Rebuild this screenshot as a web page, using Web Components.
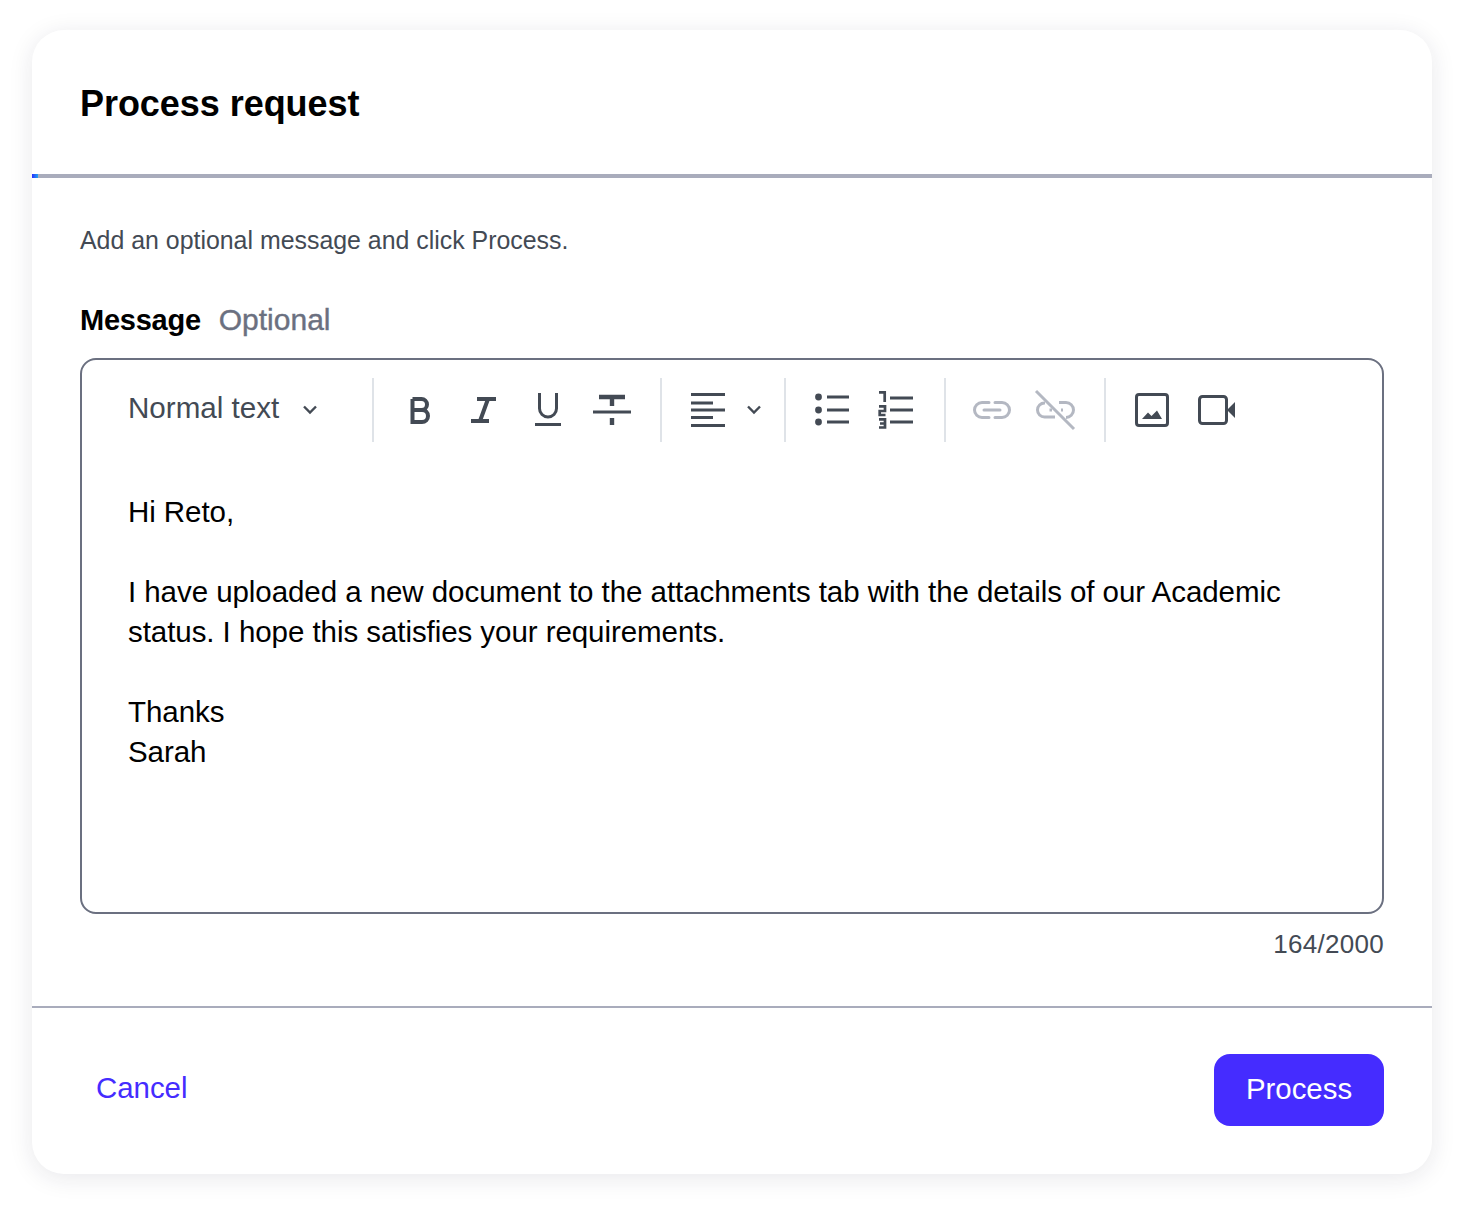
<!DOCTYPE html>
<html lang="en">
<head>
<meta charset="utf-8">
<title>Process request</title>
<style>
  html, body { margin: 0; padding: 0; background: #ffffff; }
  body { font-family: "Liberation Sans", Arial, sans-serif; }
</style>
</head>
<body>
<process-dialog>
  <span slot="title">Process request</span>
  <span slot="hint">Add an optional message and click Process.</span>
  <rich-editor slot="editor" label="Message" count="164/2000">
    <p>Hi Reto,</p>
    <p>I have uploaded a new document to the attachments tab with the details of our Academic status. I hope this satisfies your requirements.</p>
    <p>Thanks<br>Sarah</p>
  </rich-editor>
  <action-button slot="cancel" variant="link">Cancel</action-button>
  <action-button slot="submit" variant="primary">Process</action-button>
</process-dialog>

<script>
// All icons are drawn on a 48x48 grid
const ICONS = {
  bold: '<path d="M16.5 13H25.5a5.5 5.5 0 0 1 0 11H16.5M16.5 24H26a6 6 0 0 1 0 12H16.5V13Z" fill="none" stroke="currentColor" stroke-width="4"/>',
  italic: '<path d="M17 13H36M11 35H29M28 13L20 35" fill="none" stroke="currentColor" stroke-width="4"/>',
  underline: '<path d="M15.5 7V22.5a8.5 8.5 0 0 0 17 0V7" fill="none" stroke="currentColor" stroke-width="3"/><path d="M11 38.5H37" stroke="currentColor" stroke-width="3"/>',
  strike: '<path d="M11 11H37M24 11V20M24 32V39" fill="none" stroke="currentColor" stroke-width="4.4"/><path d="M5 26H43" stroke="currentColor" stroke-width="3"/>',
  align: '<path d="M7 8.5H41M7 17H29M7 24H41M7 31.5H29M7 39.5H41" fill="none" stroke="currentColor" stroke-width="3"/>',
  bullets: '<circle cx="10.5" cy="11" r="3.4" fill="currentColor"/><circle cx="10.5" cy="24" r="3.4" fill="currentColor"/><circle cx="10.5" cy="36" r="3.4" fill="currentColor"/><path d="M19 11H41M19 24H41M19 36H41" stroke="currentColor" stroke-width="3"/>',
  numbers: '<path d="M7 6.3H12.7V16M7 20.3H13V25H7.7V29H13.5M7 33.3H13V41.5H7M8 37.5H13" fill="none" stroke="currentColor" stroke-width="2.7"/><path d="M18 12H41M18 24H41M18 36H41" stroke="currentColor" stroke-width="3"/>',
  link: '<path d="M21 16.5H14a7.5 7.5 0 0 0 0 15H21M27 16.5H34a7.5 7.5 0 0 1 0 15H27M16 24H32" fill="none" stroke="currentColor" stroke-width="3" stroke-linecap="round"/>',
  unlink: '<path d="M13 17H12.5a7 7 0 0 0 0 14H23M27 16.5H34a7.5 7.5 0 0 1 0 15H34M17.5 24H20M29 24H31" fill="none" stroke="currentColor" stroke-width="3"/><path d="M4 5L42 43" stroke="currentColor" stroke-width="3"/>',
  image: '<rect x="8.5" y="8.5" width="31" height="31" rx="2.5" fill="none" stroke="currentColor" stroke-width="3"/><path d="M14 33L20 26.5L23.5 30L29 24.5L34 33Z" fill="currentColor"/>',
  video: '<rect x="7.5" y="10.5" width="27" height="27" rx="3" fill="none" stroke="currentColor" stroke-width="3"/><path d="M35 24L43 16V32Z" fill="currentColor"/>',
};

class ToolIcon extends HTMLElement {
  connectedCallback() {
    const name = this.getAttribute('name');
    const disabled = this.hasAttribute('disabled');
    this.attachShadow({ mode: 'open' }).innerHTML = `
      <style>
        :host {
          display: block;
          width: 48px;
          height: 48px;
          color: ${disabled ? '#b4b8c2' : '#434a54'};
        }
        svg { display: block; width: 48px; height: 48px; }
      </style>
      <svg viewBox="0 0 48 48" aria-hidden="true">${ICONS[name]}</svg>
    `;
  }
}

class ChevronIcon extends HTMLElement {
  constructor() {
    super();
    this.attachShadow({ mode: 'open' }).innerHTML = `
      <style>
        :host { display: block; width: 16px; height: 16px; color: #434a54; }
        svg { display: block; width: 16px; height: 16px; }
      </style>
      <svg viewBox="0 0 16 16" aria-hidden="true">
        <path d="M2 4.5L8 10.5L14 4.5" fill="none" stroke="currentColor" stroke-width="2.4"/>
      </svg>
    `;
  }
}

class ToolGroup extends HTMLElement {
  constructor() {
    super();
    this.attachShadow({ mode: 'open' }).innerHTML = `
      <style>
        :host {
          display: flex;
          align-items: center;
          height: 64px;
          gap: 16px;
          box-sizing: border-box;
        }
        :host([divided]) { border-left: 2px solid #dfe3e8; }
      </style>
      <slot></slot>
    `;
  }
}

class EditorToolbar extends HTMLElement {
  constructor() {
    super();
    this.attachShadow({ mode: 'open' }).innerHTML = `
      <style>
        :host {
          display: flex;
          align-items: center;
          height: 64px;
          color: #434a54;
        }
        .style-select {
          display: flex;
          align-items: center;
          width: 290px;
          padding-left: 46px;
          box-sizing: border-box;
          font-size: 29.6px;
        }
        .style-select span { padding-bottom: 4px; }
        .style-select chevron-icon { margin-left: 23px; }
        .marks { padding-left: 22px; width: 288px; box-sizing: border-box; }
        .align { padding-left: 22px; width: 124px; box-sizing: border-box; gap: 14px; }
        .lists { padding-left: 22px; width: 160px; box-sizing: border-box; }
        .links { padding-left: 22px; width: 160px; box-sizing: border-box; }
        .media { padding-left: 22px; }
      </style>
      <div class="style-select"><span>Normal text</span><chevron-icon></chevron-icon></div>
      <tool-group divided class="marks">
        <tool-icon name="bold"></tool-icon>
        <tool-icon name="italic"></tool-icon>
        <tool-icon name="underline"></tool-icon>
        <tool-icon name="strike"></tool-icon>
      </tool-group>
      <tool-group divided class="align">
        <tool-icon name="align"></tool-icon>
        <chevron-icon></chevron-icon>
      </tool-group>
      <tool-group divided class="lists">
        <tool-icon name="bullets"></tool-icon>
        <tool-icon name="numbers"></tool-icon>
      </tool-group>
      <tool-group divided class="links">
        <tool-icon name="link" disabled></tool-icon>
        <tool-icon name="unlink" disabled></tool-icon>
      </tool-group>
      <tool-group divided class="media">
        <tool-icon name="image"></tool-icon>
        <tool-icon name="video"></tool-icon>
      </tool-group>
    `;
  }
}

class RichEditor extends HTMLElement {
  connectedCallback() {
    const label = this.getAttribute('label');
    const count = this.getAttribute('count');
    this.attachShadow({ mode: 'open' }).innerHTML = `
      <style>
        :host { display: block; }
        .label {
          display: flex;
          gap: 18px;
          height: 38px;
          margin-bottom: 19px;
          align-items: center;
          font-size: 29px;
          line-height: 38px;
        }
        .label b { font-weight: 700; color: #000; letter-spacing: -0.25px; }
        .label span { color: #6b7080; font-size: 30px; -webkit-text-stroke: 0.4px #6b7080; }
        .box {
          box-sizing: border-box;
          height: 556px;
          border: 2px solid #6b7080;
          border-radius: 16px;
          padding-top: 18px;
        }
        .content {
          padding: 50px 46px 0;
          font-size: 29.5px;
          letter-spacing: -0.06px;
          line-height: 40px;
          color: #000;
        }
        ::slotted(p) { margin: 0 0 40px; }
        .count {
          margin-top: 14px;
          text-align: right;
          font-size: 26px;
          letter-spacing: 0.3px;
          line-height: 32px;
          color: #434a54;
        }
      </style>
      <div class="label"><b>${label}</b><span>Optional</span></div>
      <div class="box">
        <editor-toolbar></editor-toolbar>
        <div class="content"><slot></slot></div>
      </div>
      <div class="count">${count}</div>
    `;
  }
}

class ActionButton extends HTMLElement {
  constructor() {
    super();
    this.attachShadow({ mode: 'open' }).innerHTML = `
      <style>
        :host {
          display: inline-flex;
          align-items: center;
          justify-content: center;
          box-sizing: border-box;
          height: 68px;
          padding: 0 16px;
          font-size: 29.4px;
          color: #452cff;
          border-radius: 16px;
        }
        :host([variant="primary"]) {
          height: 72px;
          width: 170px;
          padding-bottom: 3px;
          color: #fff;
          background: #452cff;
        }
      </style>
      <slot></slot>
    `;
  }
}

class ProcessDialog extends HTMLElement {
  constructor() {
    super();
    this.attachShadow({ mode: 'open' }).innerHTML = `
      <style>
        :host {
          display: block;
          box-sizing: border-box;
          width: 1400px;
          height: 1144px;
          margin: 30px 32px;
          background: #fff;
          border-radius: 32px;
          box-shadow: 0 4px 24px rgba(30, 34, 60, 0.10);
          overflow: hidden;
        }
        header {
          height: 144px;
          box-sizing: border-box;
          padding: 52px 48px 0;
          font-size: 36px;
          letter-spacing: -0.05px;
          line-height: 44px;
          font-weight: 700;
          color: #000;
        }
        .progress {
          height: 4px;
          background: linear-gradient(90deg, #2b2dff 0, #1fa4f0 6px, #a9acbc 6px);
        }
        main { padding: 44px 48px 0; height: 828px; box-sizing: border-box; }
        .hint {
          font-size: 24.9px;
          line-height: 36px;
          color: #434a54;
          margin-bottom: 43px;
        }
        footer {
          border-top: 2px solid #a9acbc;
          height: 168px;
          box-sizing: border-box;
          padding: 46px 48px 0;
          display: flex;
          justify-content: space-between;
          align-items: flex-start;
        }
      </style>
      <header><slot name="title"></slot></header>
      <div class="progress"></div>
      <main>
        <div class="hint"><slot name="hint"></slot></div>
        <slot name="editor"></slot>
      </main>
      <footer>
        <slot name="cancel"></slot>
        <slot name="submit"></slot>
      </footer>
    `;
  }
}

customElements.define('tool-icon', ToolIcon);
customElements.define('chevron-icon', ChevronIcon);
customElements.define('tool-group', ToolGroup);
customElements.define('editor-toolbar', EditorToolbar);
customElements.define('rich-editor', RichEditor);
customElements.define('action-button', ActionButton);
customElements.define('process-dialog', ProcessDialog);
</script>
</body>
</html>
